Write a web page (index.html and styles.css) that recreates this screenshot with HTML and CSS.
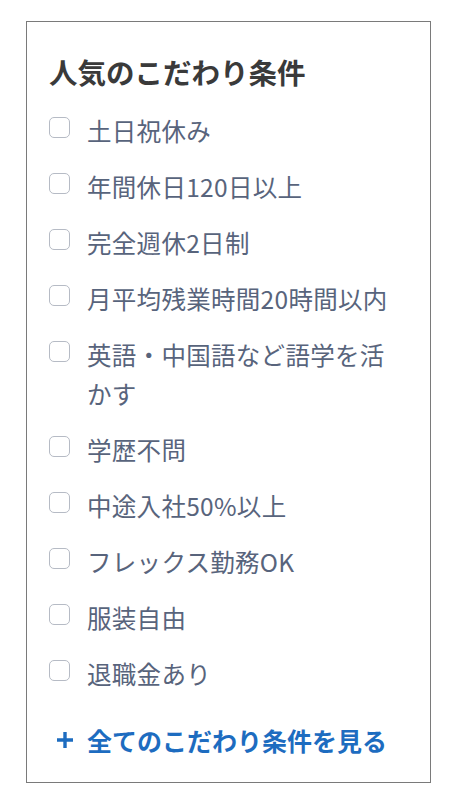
FILE: index.html
```html
<!DOCTYPE html>
<html lang="ja">
<head>
<meta charset="utf-8">
<link rel="stylesheet" href="styles.css">
</head>
<body>
<div class="page">
  <section class="panel">
    <h2 class="panel-title">人気のこだわり条件</h2>
    <ul class="options">
      <li class="option"><span class="check"></span><span class="label">土日祝休み</span></li>
      <li class="option"><span class="check"></span><span class="label">年間休日120日以上</span></li>
      <li class="option"><span class="check"></span><span class="label">完全週休2日制</span></li>
      <li class="option"><span class="check"></span><span class="label">月平均残業時間20時間以内</span></li>
      <li class="option"><span class="check"></span><span class="label">英語・中国語など語学を活かす</span></li>
      <li class="option"><span class="check"></span><span class="label">学歴不問</span></li>
      <li class="option"><span class="check"></span><span class="label">中途入社50%以上</span></li>
      <li class="option"><span class="check"></span><span class="label">フレックス勤務OK</span></li>
      <li class="option"><span class="check"></span><span class="label">服装自由</span></li>
      <li class="option"><span class="check"></span><span class="label">退職金あり</span></li>
    </ul>
    <a class="more" href="#"><span class="plus"><svg width="18" height="18" viewBox="0 0 18 18"><path d="M9 1v16M1 9h16" stroke="currentColor" stroke-width="3.4" fill="none"/></svg></span><span class="more-text">全てのこだわり条件を見る</span></a>
  </section>
</div>
</body>
</html>
```
FILE: styles.css
```css
* { box-sizing: border-box; }
html, body { margin: 0; padding: 0; background: #fff; }
body { font-family: "Noto Sans CJK JP", "Noto Sans", sans-serif; }
.page { padding: 21px 0 0 26px; }
.panel {
  width: 405px;
  height: 762px;
  border: 1px solid #7a7a7a;
  padding: 30px 22px 0 22px;
}
.panel-title {
  margin: 0 0 19px 0;
  font-size: 28.5px;
  line-height: 40px;
  font-weight: 700;
  color: #3a3a3a;
}
.options { list-style: none; margin: 0; padding: 0; display: flex; flex-direction: column; gap: 17px; }
.option { display: flex; align-items: flex-start; gap: 17px; }
.check {
  flex: none;
  width: 21px;
  height: 21px;
  margin-top: 6px;
  border: 1.5px solid #b6bbc5;
  border-radius: 5px;
  background: #fff;
}
.label {
  font-size: 24.5px;
  line-height: 39px;
  letter-spacing: 0.3px;
  color: #58647c;
}
.more {
  display: flex;
  align-items: center;
  gap: 13px;
  margin-top: 27px;
  padding-left: 7px;
  font-size: 25px;
  line-height: 40px;
  font-weight: 700;
  color: #1d6cc0;
  text-decoration: none;
}
.plus { display: flex; flex: none; }
.more-text { white-space: nowrap; }
```
